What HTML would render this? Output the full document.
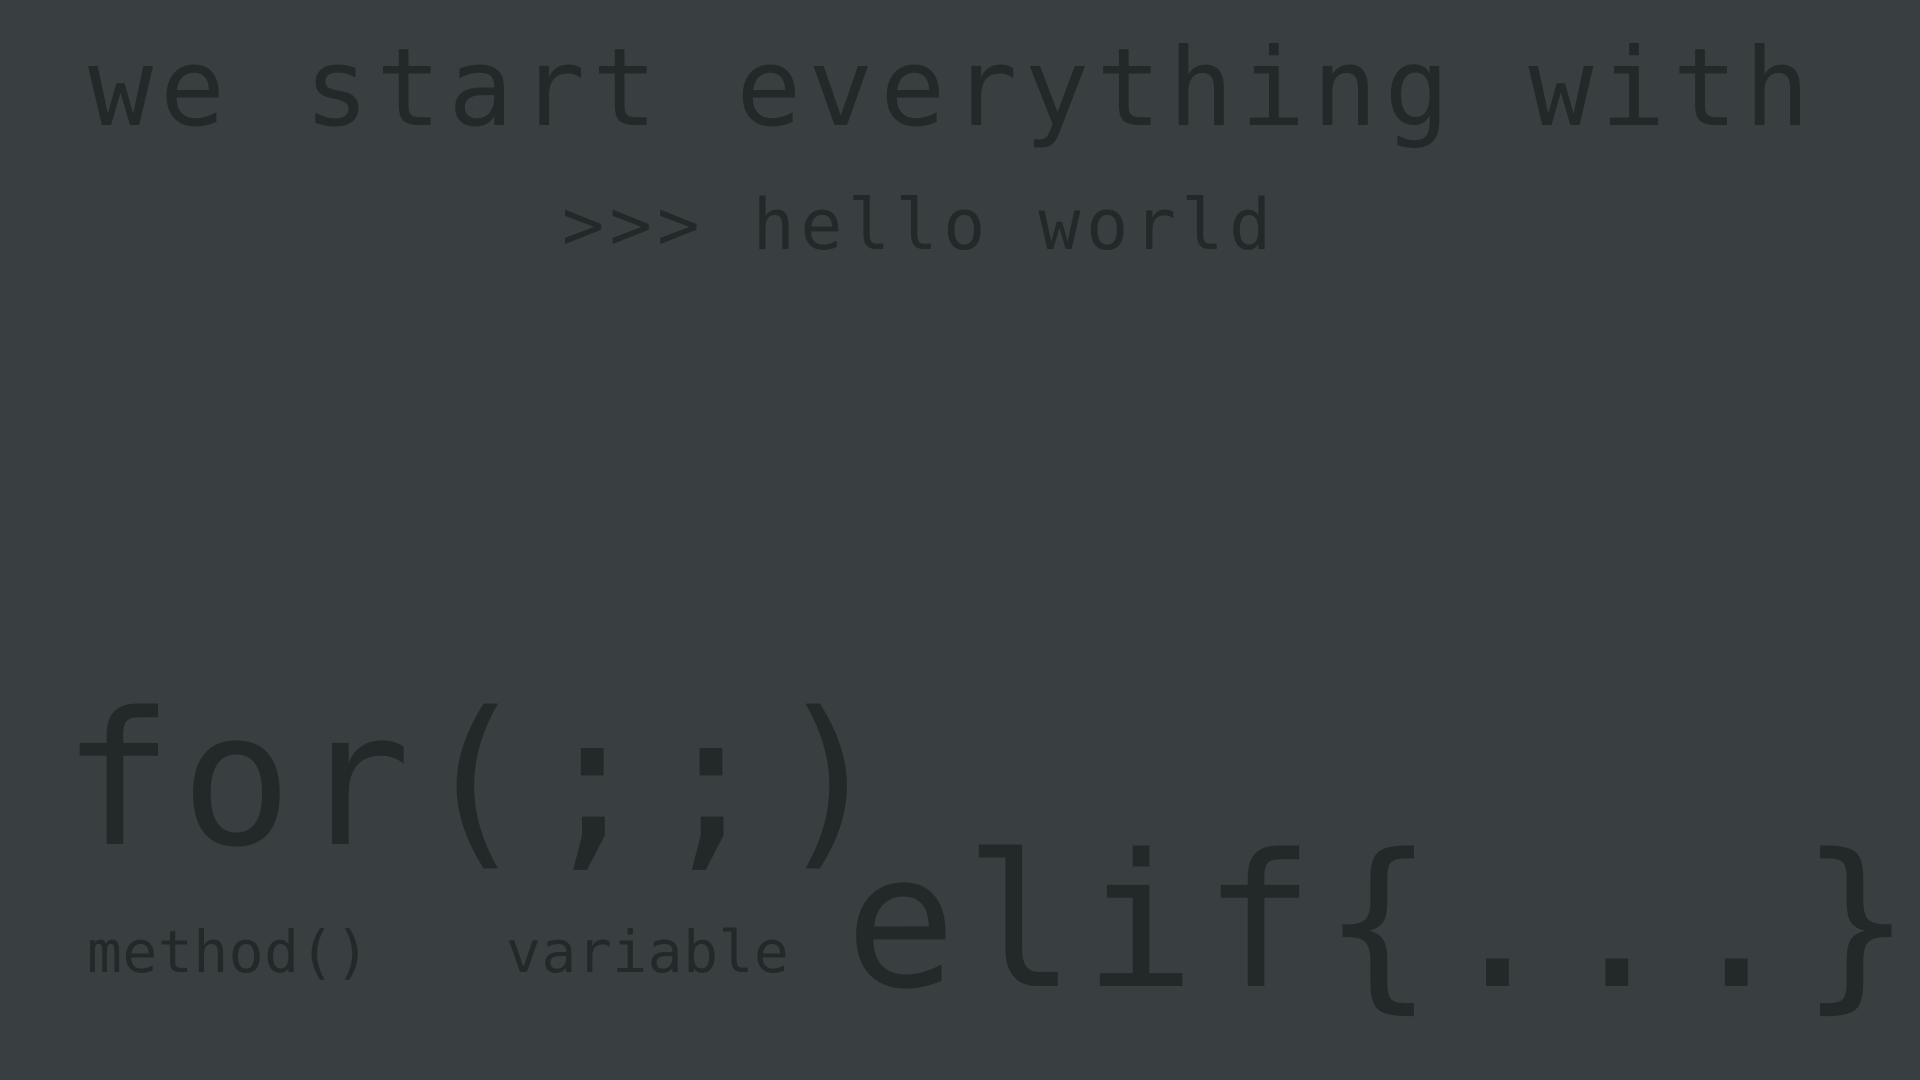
<!DOCTYPE html>
<html><head><meta charset="utf-8"><style>
html,body{margin:0;padding:0;width:1920px;height:1080px;overflow:hidden;background:#393f40;}
.t{position:absolute;white-space:pre;font-family:"DejaVu Sans Mono","Liberation Mono",monospace;color:#232928;line-height:1;}
</style></head><body>
<div class="t" style="left:88px;top:35px;font-size:108px;letter-spacing:7px;">we start everything with</div>
<div class="t" style="left:562px;top:190px;font-size:70px;letter-spacing:5.5px;">&gt;&gt;&gt; hello world</div>
<div class="t" style="left:62px;top:688px;font-size:185px;letter-spacing:7.3px;">for(;;)</div>
<div class="t" style="left:845px;top:830px;font-size:185px;letter-spacing:8px;">elif{...}</div>
<div class="t" style="left:87px;top:923px;font-size:58px;letter-spacing:0.5px;">method()</div>
<div class="t" style="left:506px;top:923px;font-size:58px;letter-spacing:0.5px;">variable</div>
</body></html>
